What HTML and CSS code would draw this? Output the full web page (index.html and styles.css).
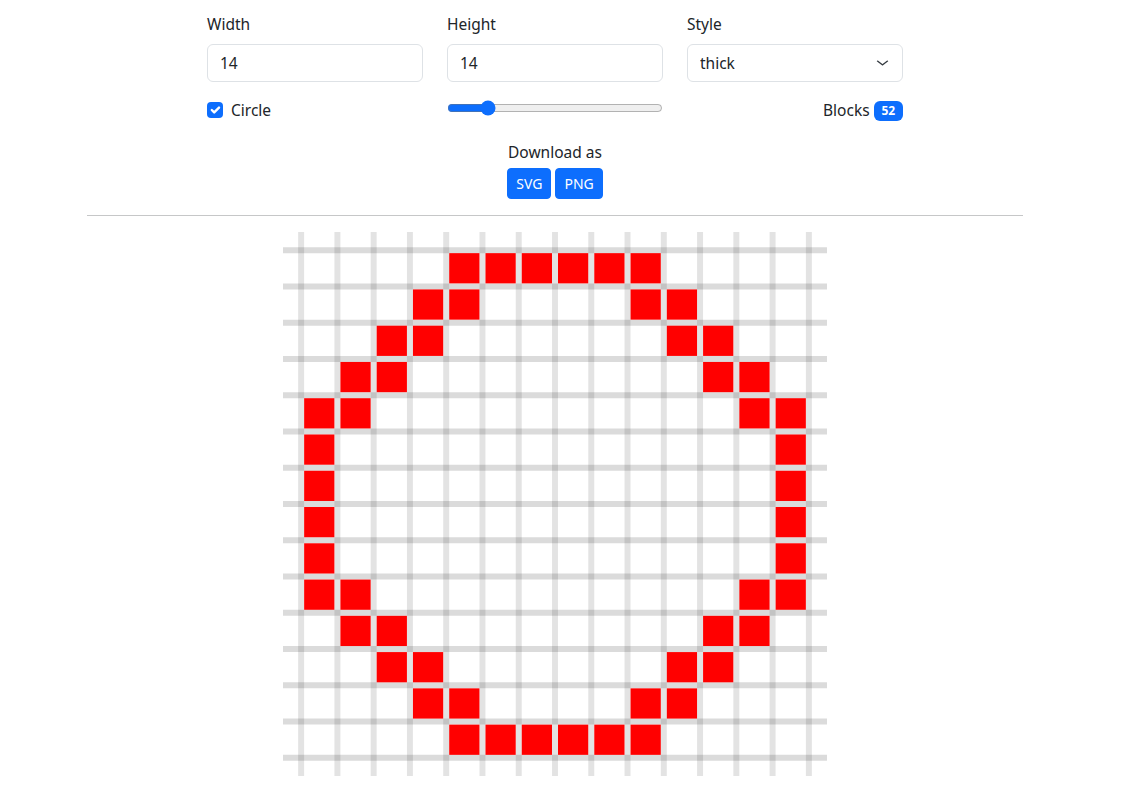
FILE: index.html
```html
<!DOCTYPE html>
<html lang="en">
<head>
<meta charset="utf-8">
<title>Pixel Circle Generator</title>
<link rel="stylesheet" href="styles.css">
</head>
<body>
<div class="page">
  <main class="container">
    <section class="controls">
      <div class="col">
        <label class="form-label" for="w">Width</label>
        <input class="form-control" id="w" type="text" value="14">
        <label class="form-check">
          <span class="check-box"><svg viewBox="0 0 20 20" width="16" height="16"><path d="m6 10 3 3 6-6" fill="none" stroke="#fff" stroke-width="3" stroke-linecap="round" stroke-linejoin="round"/></svg></span>
          <span>Circle</span>
        </label>
      </div>
      <div class="col">
        <label class="form-label" for="h">Height</label>
        <input class="form-control" id="h" type="text" value="14">
        <input class="range" type="range" min="1" max="80" value="14">
      </div>
      <div class="col">
        <label class="form-label" for="s">Style</label>
        <div class="select-wrap">
          <select class="form-select" id="s"><option>thick</option><option>thin</option></select>
          <svg class="chevron" viewBox="0 0 16 16" width="13" height="10" preserveAspectRatio="none"><path d="m2 5 6 6 6-6" fill="none" stroke="#343a40" stroke-width="2" stroke-linecap="round" stroke-linejoin="round"/></svg>
        </div>
        <div class="blocks">Blocks <span class="badge">52</span></div>
      </div>
    </section>

    <section class="download">
      <div class="download-label">Download as</div>
      <div class="btns">
        <button class="btn">SVG</button>
        <button class="btn">PNG</button>
      </div>
    </section>

    <hr class="divider">

    <div class="canvas">
      <svg class="grid" viewBox="-0.5 -0.5 15 15" width="544" height="544">
        <path class="hl" d="M-0.5 0H14.5M-0.5 1H14.5M-0.5 2H14.5M-0.5 3H14.5M-0.5 4H14.5M-0.5 5H14.5M-0.5 6H14.5M-0.5 7H14.5M-0.5 8H14.5M-0.5 9H14.5M-0.5 10H14.5M-0.5 11H14.5M-0.5 12H14.5M-0.5 13H14.5M-0.5 14H14.5"/>
        <path class="vl" d="M0 -0.5V14.5M1 -0.5V14.5M2 -0.5V14.5M3 -0.5V14.5M4 -0.5V14.5M5 -0.5V14.5M6 -0.5V14.5M7 -0.5V14.5M8 -0.5V14.5M9 -0.5V14.5M10 -0.5V14.5M11 -0.5V14.5M12 -0.5V14.5M13 -0.5V14.5M14 -0.5V14.5"/>
        <g class="blk">
          <rect x="4.083" y="0.083" width="0.834" height="0.834"/><rect x="5.083" y="0.083" width="0.834" height="0.834"/><rect x="6.083" y="0.083" width="0.834" height="0.834"/><rect x="7.083" y="0.083" width="0.834" height="0.834"/><rect x="8.083" y="0.083" width="0.834" height="0.834"/><rect x="9.083" y="0.083" width="0.834" height="0.834"/>
          <rect x="3.083" y="1.083" width="0.834" height="0.834"/><rect x="4.083" y="1.083" width="0.834" height="0.834"/><rect x="9.083" y="1.083" width="0.834" height="0.834"/><rect x="10.083" y="1.083" width="0.834" height="0.834"/>
          <rect x="2.083" y="2.083" width="0.834" height="0.834"/><rect x="3.083" y="2.083" width="0.834" height="0.834"/><rect x="10.083" y="2.083" width="0.834" height="0.834"/><rect x="11.083" y="2.083" width="0.834" height="0.834"/>
          <rect x="1.083" y="3.083" width="0.834" height="0.834"/><rect x="2.083" y="3.083" width="0.834" height="0.834"/><rect x="11.083" y="3.083" width="0.834" height="0.834"/><rect x="12.083" y="3.083" width="0.834" height="0.834"/>
          <rect x="0.083" y="4.083" width="0.834" height="0.834"/><rect x="1.083" y="4.083" width="0.834" height="0.834"/><rect x="12.083" y="4.083" width="0.834" height="0.834"/><rect x="13.083" y="4.083" width="0.834" height="0.834"/>
          <rect x="0.083" y="5.083" width="0.834" height="0.834"/><rect x="13.083" y="5.083" width="0.834" height="0.834"/>
          <rect x="0.083" y="6.083" width="0.834" height="0.834"/><rect x="13.083" y="6.083" width="0.834" height="0.834"/>
          <rect x="0.083" y="7.083" width="0.834" height="0.834"/><rect x="13.083" y="7.083" width="0.834" height="0.834"/>
          <rect x="0.083" y="8.083" width="0.834" height="0.834"/><rect x="13.083" y="8.083" width="0.834" height="0.834"/>
          <rect x="0.083" y="9.083" width="0.834" height="0.834"/><rect x="1.083" y="9.083" width="0.834" height="0.834"/><rect x="12.083" y="9.083" width="0.834" height="0.834"/><rect x="13.083" y="9.083" width="0.834" height="0.834"/>
          <rect x="1.083" y="10.083" width="0.834" height="0.834"/><rect x="2.083" y="10.083" width="0.834" height="0.834"/><rect x="11.083" y="10.083" width="0.834" height="0.834"/><rect x="12.083" y="10.083" width="0.834" height="0.834"/>
          <rect x="2.083" y="11.083" width="0.834" height="0.834"/><rect x="3.083" y="11.083" width="0.834" height="0.834"/><rect x="10.083" y="11.083" width="0.834" height="0.834"/><rect x="11.083" y="11.083" width="0.834" height="0.834"/>
          <rect x="3.083" y="12.083" width="0.834" height="0.834"/><rect x="4.083" y="12.083" width="0.834" height="0.834"/><rect x="9.083" y="12.083" width="0.834" height="0.834"/><rect x="10.083" y="12.083" width="0.834" height="0.834"/>
          <rect x="4.083" y="13.083" width="0.834" height="0.834"/><rect x="5.083" y="13.083" width="0.834" height="0.834"/><rect x="6.083" y="13.083" width="0.834" height="0.834"/><rect x="7.083" y="13.083" width="0.834" height="0.834"/><rect x="8.083" y="13.083" width="0.834" height="0.834"/><rect x="9.083" y="13.083" width="0.834" height="0.834"/>
        </g>
      </svg>
    </div>
  </main>
</div>
</body>
</html>
```

FILE: styles.css
```css
* { box-sizing: border-box; }

html, body {
  margin: 0;
  background: #fff;
}

body {
  font-family: "Noto Sans", "Open Sans", sans-serif;
  font-size: 15.5px;
  line-height: 24px;
  color: #212529;
}

.page {
  width: 1110px;
}

.container {
  width: 936px;
  margin: 0 auto;
  padding-top: 12px;
}

.controls {
  width: 696px;
  margin: 0 auto;
  display: grid;
  grid-template-columns: repeat(3, 216px);
  column-gap: 24px;
}

.col {
  display: flex;
  flex-direction: column;
  align-items: stretch;
}

.form-label {
  display: block;
  margin-bottom: 8px;
  height: 24px;
}

.form-control,
.form-select {
  display: block;
  width: 100%;
  height: 38px;
  padding: 6px 12px;
  font: inherit;
  color: #212529;
  background: #fff;
  border: 1px solid #dee2e6;
  border-radius: 6px;
  margin: 0 0 16px;
  outline: none;
}

.select-wrap {
  position: relative;
}

.form-select {
  appearance: none;
  -webkit-appearance: none;
  padding-right: 36px;
}

.chevron {
  position: absolute;
  right: 14px;
  top: 14px;
}

.form-check {
  display: flex;
  align-items: flex-start;
  gap: 8px;
  height: 24px;
  margin-bottom: 2px;
}

.check-box {
  width: 16px;
  height: 16px;
  margin-top: 4px;
  background: #0d6efd;
  border-radius: 4px;
  display: flex;
}

.range {
  width: 216px;
  height: 16px;
  margin: 2px 0 0;
  accent-color: #0d6efd;
}

.blocks {
  text-align: right;
  height: 24px;
}

.badge {
  display: inline-block;
  padding: 4px 7.8px;
  font-size: 12px;
  font-weight: 700;
  line-height: 1;
  color: #fff;
  background: #0d6efd;
  border-radius: 6px;
  vertical-align: 1px;
}

.download {
  margin-top: 16px;
  text-align: center;
}

.download-label {
  height: 24px;
}

.btns {
  margin-top: 4px;
  display: flex;
  justify-content: center;
  gap: 4px;
}

.btn {
  font: inherit;
  font-size: 14px;
  line-height: 21px;
  padding: 4px 8px;
  color: #fff;
  background: #0d6efd;
  border: 1px solid #0d6efd;
  border-radius: 4px;
}

.divider {
  margin: 16px 0;
  border: 0;
  border-top: 1px solid #c6c7c8;
}

.canvas {
  display: flex;
  justify-content: center;
}

.grid {
  display: block;
}

.hl {
  fill: none;
  stroke: rgba(0, 0, 0, 0.14);
  stroke-width: 0.165;
}

.vl {
  fill: none;
  stroke: rgba(0, 0, 0, 0.11);
  stroke-width: 0.165;
}

.blk {
  fill: #ff0000;
}
```
